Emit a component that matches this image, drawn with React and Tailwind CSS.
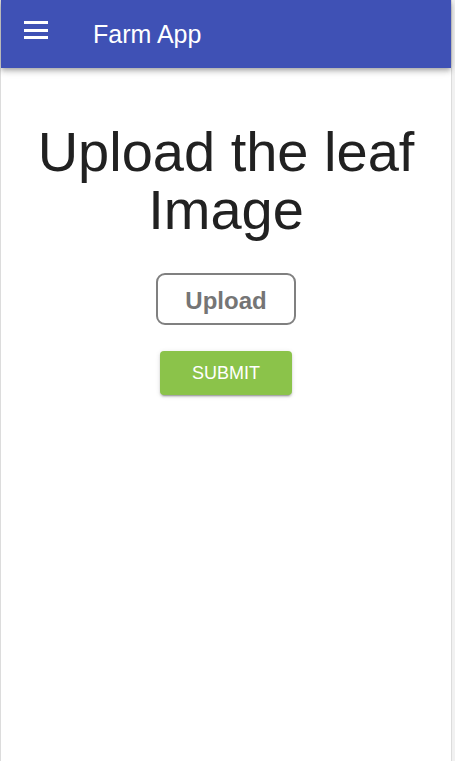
import React from "react";

export default function App() {
  return (
    <div className="flex h-[761px] w-[455px] bg-white" style={{ fontFamily: '"Liberation Sans", Arial, sans-serif' }}>
      <div className="flex w-[451px] flex-col border-l border-[#dcdcdc]">
        <header className="relative z-10 flex h-[68px] items-center bg-[#3f51b5] shadow-[0_2px_4px_-1px_rgba(0,0,0,0.2),0_4px_5px_0_rgba(0,0,0,0.14),0_1px_10px_0_rgba(0,0,0,0.12)]">
          <div className="mb-[8px] ml-[23px] flex w-[24px] flex-col gap-[4.5px]">
            <span className="block h-[3px] w-[24px] bg-white"></span>
            <span className="block h-[3px] w-[24px] bg-white"></span>
            <span className="block h-[3px] w-[24px] bg-white"></span>
          </div>
          <h1 className="ml-[45px] text-[25px] leading-none text-white">Farm App</h1>
        </header>
        <main className="flex flex-col items-center pt-[55px]">
          <h2 className="text-center text-[56px] leading-[58px] text-[#212121]">
            Upload the leaf
            <br />
            Image
          </h2>
          <button className="mt-[34px] flex h-[52px] w-[140px] items-center justify-center rounded-[9px] border-2 border-[#808080] bg-white pt-[3px] text-[24px] font-bold text-[#757575]">
            Upload
          </button>
          <button className="mt-[26px] flex h-[44px] w-[132px] items-center justify-center rounded-[4px] bg-[#8bc34a] text-[18px] text-white shadow-[0_3px_1px_-2px_rgba(0,0,0,0.2),0_2px_2px_0_rgba(0,0,0,0.14),0_1px_5px_0_rgba(0,0,0,0.12)]">
            SUBMIT
          </button>
        </main>
      </div>
      <div className="w-[4px] border-l border-[#dcdcdc] bg-[#f1f1f1]"></div>
    </div>
  );
}
